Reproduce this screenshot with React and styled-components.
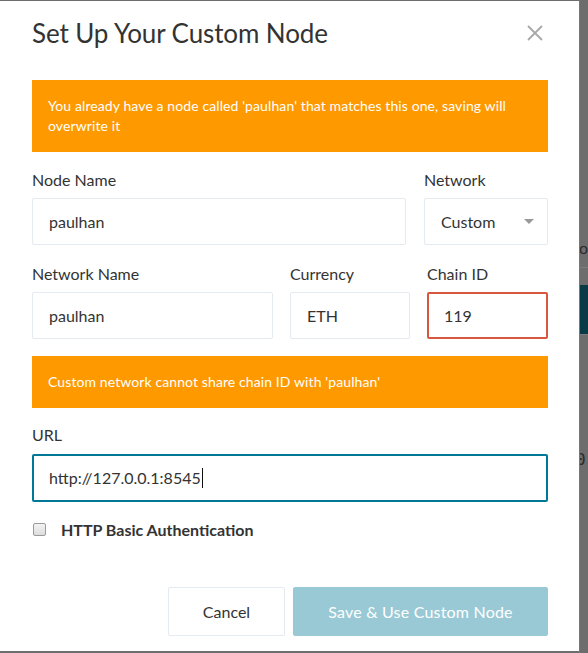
import React from "react";
import styled, { createGlobalStyle } from "styled-components";

const GlobalStyle = createGlobalStyle`
  html, body {
    margin: 0;
    padding: 0;
    background: #6d6d6d;
    font-family: Lato, "Open Sans", "Liberation Sans", sans-serif;
    overflow: hidden;
  }
`;

const Screen = styled.div`
  display: flex;
  width: 588px;
  height: 653px;
  background: #6d6d6d;
`;

const Modal = styled.div`
  width: 579px;
  height: 650px;
  margin-top: 1px;
  background: #fff;
  box-sizing: border-box;
  display: flex;
  flex-direction: column;
  padding: 0 31px 0 32px;
  color: #333;
`;

const Backdrop = styled.div`
  flex: 1;
  display: flex;
  flex-direction: column;
  overflow: hidden;
  border-left: 1px solid #777;
`;

const BehindText = styled.div`
  height: ${(p) => p.$h}px;
  box-sizing: border-box;
  font-family: ${(p) => (p.$mono ? '"DejaVu Sans Mono", monospace' : "Lato, sans-serif")};
  font-size: 16px;
  line-height: 20px;
  color: #2a2a2a;
  white-space: nowrap;
  margin-left: -4px;
`;

const BehindRule = styled.div`
  height: 1px;
  background: #7c7c7c;
`;

const BehindBar = styled.div`
  height: ${(p) => p.$h}px;
  background: #0a3a45;
`;

const Header = styled.div`
  height: 64px;
  display: flex;
  align-items: center;
  justify-content: space-between;
`;

const Title = styled.h2`
  margin: 0;
  font-size: 26px;
  font-weight: 400;
  color: #333;
  letter-spacing: -0.1px;
`;

const CloseButton = styled.button`
  border: 0;
  background: none;
  padding: 0;
  margin-right: 4px;
  width: 18px;
  height: 18px;
  display: flex;
  cursor: pointer;
`;

const Alert = styled.div`
  background: #ff9900;
  color: #fff;
  font-size: 14px;
  letter-spacing: 0.1px;
  line-height: 20px;
  padding: 16px;
  margin-top: ${(p) => p.$top || 0}px;
`;

const FieldRow = styled.div`
  display: grid;
  grid-template-columns: ${(p) => p.$cols};
  column-gap: ${(p) => p.$gap}px;
  margin-top: ${(p) => p.$top}px;
`;

const Field = styled.div`
  display: flex;
  flex-direction: column;
`;

const Label = styled.label`
  font-size: 16px;
  line-height: 22px;
  color: #333;
  margin-bottom: ${(p) => p.$gap || 7}px;
`;

const Input = styled.div`
  box-sizing: border-box;
  height: ${(p) => p.$h || 47}px;
  border: ${(p) =>
    p.$state === "error"
      ? "2px solid #d9573f"
      : p.$state === "focus"
      ? "2px solid #007896"
      : "1px solid #e5eaf0"};
  border-radius: 2px;
  display: flex;
  align-items: center;
  padding-left: ${(p) => (p.$state ? 15 : 16)}px;
  padding-right: 12px;
  font-size: 16px;
  color: #333;
  justify-content: space-between;
`;

const Caret = styled.span`
  width: 0;
  height: 0;
  border-left: 5px solid transparent;
  border-right: 5px solid transparent;
  border-top: 5px solid #999;
  margin-right: 1px;
`;

const Cursor = styled.span`
  display: inline-block;
  width: 1px;
  height: 20px;
  background: #111;
  margin-left: 1px;
  vertical-align: -4px;
`;

const CheckRow = styled.label`
  display: flex;
  align-items: center;
  gap: 15px;
  margin-top: 16px;
  height: 22px;
  font-size: 16px;
  font-weight: 700;
  color: #333;
`;

const Checkbox = styled.span`
  width: 11px;
  height: 11px;
  border: 1px solid #9a9a9a;
  border-radius: 2px;
  background: linear-gradient(#f4f4f4, #dcdcdc);
  margin-left: 1px;
`;

const Footer = styled.div`
  margin-top: auto;
  margin-bottom: 15px;
  display: flex;
  justify-content: flex-end;
  gap: 8px;
`;

const Button = styled.button`
  height: 49px;
  box-sizing: border-box;
  font-family: inherit;
  font-size: 16px;
  letter-spacing: ${(p) => (p.$primary ? "0.2px" : "0")};
  border-radius: 2px;
  padding: 0;
  width: ${(p) => p.$w}px;
  border: 1px solid ${(p) => (p.$primary ? "#99c9d5" : "#e5eaf0")};
  background: ${(p) => (p.$primary ? "#99c9d5" : "#fff")};
  color: ${(p) => (p.$primary ? "#fff" : "#333")};
`;

export default function App() {
  return (
    <>
      <GlobalStyle />
      <Screen>
        <Modal>
          <Header>
            <Title>Set Up Your Custom Node</Title>
            <CloseButton aria-label="Close">
              <svg width="18" height="18" viewBox="0 0 18 18">
                <path d="M2 2 L16 16 M16 2 L2 16" stroke="#a8a8a8" strokeWidth="1.8" />
              </svg>
            </CloseButton>
          </Header>

          <Alert $top={15}>
            You already have a node called 'paulhan' that matches this one, saving will overwrite it
          </Alert>

          <FieldRow $cols="1fr 124px" $gap={18} $top={17}>
            <Field>
              <Label>Node Name</Label>
              <Input>paulhan</Input>
            </Field>
            <Field>
              <Label>Network</Label>
              <Input>
                Custom
                <Caret />
              </Input>
            </Field>
          </FieldRow>

          <FieldRow $cols="241fr 120fr 121fr" $gap={17} $top={18}>
            <Field>
              <Label>Network Name</Label>
              <Input>paulhan</Input>
            </Field>
            <Field>
              <Label>Currency</Label>
              <Input>ETH</Input>
            </Field>
            <Field>
              <Label>Chain ID</Label>
              <Input $state="error">119</Input>
            </Field>
          </FieldRow>

          <Alert $top={17}>Custom network cannot share chain ID with 'paulhan'</Alert>

          <FieldRow $cols="1fr" $gap={0} $top={16}>
            <Field>
              <Label $gap={8}>URL</Label>
              <Input $state="focus" $h={48}>
                <span>
                  http://127.0.0.1:8545
                  <Cursor />
                </span>
              </Input>
            </Field>
          </FieldRow>

          <CheckRow>
            <Checkbox />
            HTTP Basic Authentication
          </CheckRow>

          <Footer>
            <Button $w={117}>Cancel</Button>
            <Button $w={255} $primary>
              Save &amp; Use Custom Node
            </Button>
          </Footer>
        </Modal>

        <Backdrop>
          <BehindText $h={238} />
          <BehindText $h={29}>'o</BehindText>
          <BehindRule />
          <BehindText $h={17} />
          <BehindBar $h={49} />
          <BehindRule />
          <BehindText $h={115} />
          <BehindText $h={30} $mono>0</BehindText>
        </Backdrop>
      </Screen>
    </>
  );
}
